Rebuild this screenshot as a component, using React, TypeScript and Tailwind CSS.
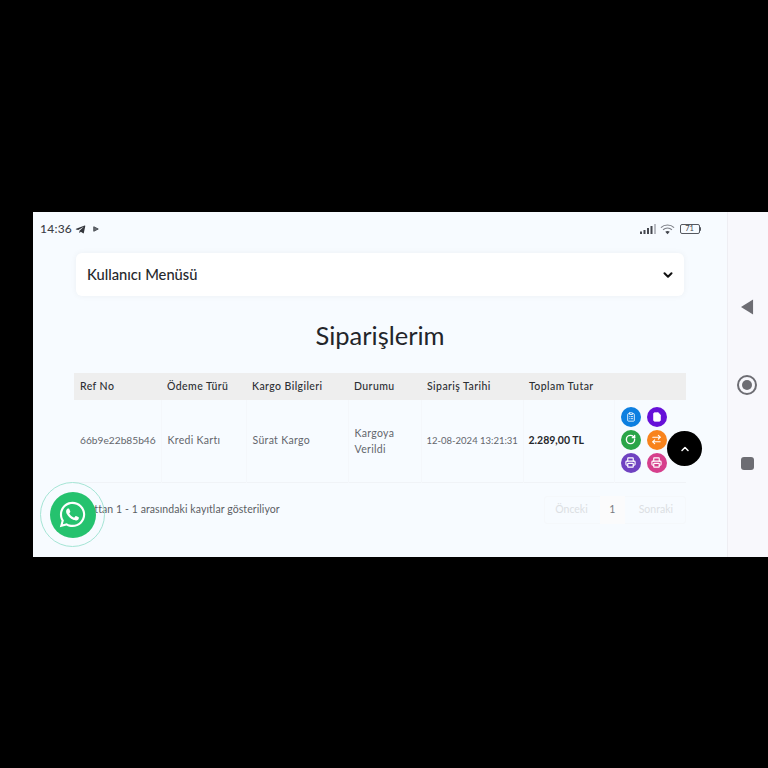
import React from 'react';
import { ChevronDown, ChevronUp, ClipboardList, File, RotateCw, ArrowRightLeft, Printer } from 'lucide-react';
import { FaWhatsapp, FaTelegramPlane } from 'react-icons/fa';

const headers = [
  { label: 'Ref No', width: 'w-[87px]' },
  { label: 'Ödeme Türü', width: 'w-[85px]' },
  { label: 'Kargo Bilgileri', width: 'w-[102px]' },
  { label: 'Durumu', width: 'w-[73px]' },
  { label: 'Sipariş Tarihi', width: 'w-[102px]' },
  { label: 'Toplam Tutar', width: 'w-[91px]' },
  { label: '', width: 'w-[72px]' },
];

function StatusBar() {
  return (
    <div className="flex h-[34px] items-center justify-between pl-[7px] pr-[26px] text-[#3c3f46]">
      <div className="flex items-center">
        <span className="text-[12px] font-medium tracking-[0.02em]">14:36</span>
        <FaTelegramPlane className="ml-[3px] h-[11px] w-[11px] text-[#33363c]" />
        <svg viewBox="0 0 8 8" className="ml-[7px] h-[6px] w-[6px]">
          <path d="M1 1 L7 4 L1 7 Z" fill="#6a6d74" stroke="#44474e" strokeWidth="1.2" />
        </svg>
      </div>
      <div className="flex items-center gap-[4px]">
        <svg viewBox="0 0 16 10" className="h-[10px] w-[16px]">
          <rect x="0" y="7.5" width="2" height="2.5" fill="#44474e" />
          <rect x="3.5" y="6" width="2" height="4" fill="#44474e" />
          <rect x="7" y="4" width="2" height="6" fill="#44474e" />
          <rect x="10.5" y="2" width="2" height="8" fill="#44474e" />
          <rect x="14" y="0" width="2" height="10" fill="#b9bcc3" />
        </svg>
        <svg viewBox="0 0 16 12" fill="none" className="h-[12px] w-[15px]">
          <path d="M1 4.5 C4.8 0.8 11.2 0.8 15 4.5" stroke="#7c7f86" strokeWidth="1.2" />
          <path d="M3.3 6.8 C6 4.3 10 4.3 12.7 6.8" stroke="#7c7f86" strokeWidth="1.2" />
          <path d="M5.6 9 C7 7.8 9 7.8 10.4 9 L8 11.5 Z" fill="#44474e" />
        </svg>
        <div className="ml-[1px] flex items-center">
          <div className="flex h-[10px] w-[20px] items-center justify-center rounded-[2px] border border-[#55585f] text-[7.5px] leading-none text-[#44474e]">
            71
          </div>
          <div className="h-[4px] w-[1.5px] rounded-r-sm bg-[#55585f]" />
        </div>
      </div>
    </div>
  );
}

function ActionButton({ color, children }: { color: string; children: React.ReactNode }) {
  return <span className={`flex h-[20px] w-[20px] items-center justify-center rounded-full text-white ${color}`}>{children}</span>;
}

function OrdersTable() {
  return (
    <table className="ml-[41px] w-[612px] table-fixed border-collapse text-[10.5px]">
      <thead>
        <tr className="h-[27px] bg-[#eeeeee] text-left tracking-[0.04em] text-[#2c2e33]">
          {headers.map((h) => (
            <th key={h.label} className={`${h.width} pl-[6px] font-medium`}>{h.label}</th>
          ))}
        </tr>
      </thead>
      <tbody className="tracking-[0.03em] text-[#63666c]">
        <tr className="h-[82px] border-b border-[#f0f3f7]">
          <td className="pl-[6px] text-[10.2px] tracking-normal">66b9e22b85b46</td>
          <td className="border-l border-[#f4f7fb] pl-[6px]">Kredi Kartı</td>
          <td className="border-l border-[#f4f7fb] pl-[6px]">Sürat Kargo</td>
          <td className="border-l border-[#f4f7fb] pl-[6px] leading-[16px]">Kargoya<br />Verildi</td>
          <td className="whitespace-nowrap border-l border-[#f4f7fb] pl-[5px] text-[9.5px] tracking-normal">12-08-2024 13:21:31</td>
          <td className="border-l border-[#f4f7fb] pl-[5px] font-bold tracking-normal text-[#25272b]">2.289,00 TL</td>
          <td className="border-l border-[#f4f7fb] pb-[2px] pl-[6px]">
            <div className="grid w-[46px] grid-cols-2 gap-x-[6px] gap-y-[3px]">
              <ActionButton color="bg-[#0d7fe0]"><ClipboardList size={10} /></ActionButton>
              <ActionButton color="bg-[#6610d8]"><File size={10} fill="white" /></ActionButton>
              <ActionButton color="bg-[#2aa548]"><RotateCw size={11} strokeWidth={3} /></ActionButton>
              <ActionButton color="bg-[#f8831c]"><ArrowRightLeft size={11} strokeWidth={2.5} /></ActionButton>
              <ActionButton color="bg-[#6f42c1]"><Printer size={11} strokeWidth={2.5} /></ActionButton>
              <ActionButton color="bg-[#d63f8c]"><Printer size={11} strokeWidth={2.5} /></ActionButton>
            </div>
          </td>
        </tr>
      </tbody>
    </table>
  );
}

function Footer() {
  return (
    <div className="ml-[41px] mt-[13px] flex w-[612px] items-center justify-between text-[10.5px]">
      <span className="tracking-[0.008em] text-[#5b5e64]">Kayıttan 1 - 1 arasındaki kayıtlar gösteriliyor</span>
      <div className="flex h-[28px] items-center rounded-[3px] border border-[#f5f8fb] text-[#dcdfe3]">
        <span className="pl-[10px] pr-[12px]">Önceki</span>
        <span className="flex h-[28px] w-[25px] items-center justify-center bg-[#fbfbfc] text-[#777a80]">1</span>
        <span className="pl-[14px] pr-[12px]">Sonraki</span>
      </div>
    </div>
  );
}

export default function App() {
  return (
    <div className="flex h-[768px] w-[768px] flex-col bg-black pl-[33px] pt-[212px] [font-family:Lato,'Noto_Sans',sans-serif]">
      <div className="relative flex h-[345px] w-[735px]">
        <main className="w-[694px] bg-[#f7fbff]">
          <StatusBar />
          <div className="mx-[43px] mt-[7px] flex h-[43px] items-center justify-between rounded-[6px] bg-white pl-[11px] pr-[9px] shadow-[0_0_6px_rgba(0,0,0,0.05)]">
            <span className="text-[14.7px] font-medium text-[#26282c]">Kullanıcı Menüsü</span>
            <ChevronDown size={14} strokeWidth={3.5} className="text-[#111]" />
          </div>
          <h1 className="mt-[23px] text-center text-[25.5px] leading-[32px] text-[#23252a]">Siparişlerim</h1>
          <div className="mt-[22px]">
            <OrdersTable />
            <Footer />
          </div>
        </main>
        <aside className="flex w-[41px] flex-col items-center border-l border-[#eeeef3] bg-[#f8f8fc] pt-[87px]">
          <svg viewBox="0 0 14 16" className="-ml-[2px] h-[16px] w-[13px]">
            <path d="M13 0 V16 L0 8 Z" fill="#6d6d73" />
          </svg>
          <div className="-ml-[2px] mt-[60px] flex h-[20px] w-[20px] items-center justify-center rounded-full border-2 border-[#6d6d73]">
            <div className="h-[10px] w-[10px] rounded-full bg-[#6d6d73]" />
          </div>
          <div className="-ml-[2px] mt-[62px] h-[13px] w-[13px] rounded-[3px] bg-[#6d6d73]" />
        </aside>

        {/* floating buttons */}
        <div className="absolute left-[7px] top-[270px] flex h-[65px] w-[65px] items-center justify-center rounded-full border border-[#a5e5d5]">
          <div className="flex h-[46px] w-[46px] items-center justify-center rounded-full bg-[#25c26e]">
            <FaWhatsapp className="h-[29px] w-[29px] text-white" />
          </div>
        </div>
        <div className="absolute left-[634px] top-[219px] flex h-[35px] w-[35px] items-center justify-center rounded-full bg-black">
          <ChevronUp size={12} strokeWidth={3} className="text-white" />
        </div>
      </div>
    </div>
  );
}
